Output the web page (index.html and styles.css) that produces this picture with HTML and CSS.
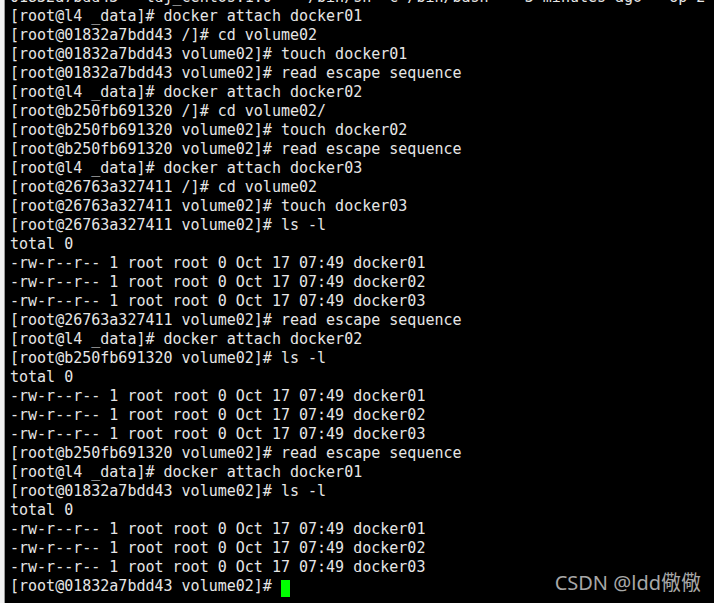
FILE: index.html
```html
<!DOCTYPE html>
<html>
<head>
<meta charset="utf-8">
<link rel="stylesheet" href="styles.css">
</head>
<body>
<div class="term">
<pre class="out">01832a7bdd43   ldj_centos:1.0   "/bin/sh -c /bin/bash"   3 minutes ago   Up 2 minutes
[root@l4 _data]# docker attach docker01
[root@01832a7bdd43 /]# cd volume02
[root@01832a7bdd43 volume02]# touch docker01
[root@01832a7bdd43 volume02]# read escape sequence
[root@l4 _data]# docker attach docker02
[root@b250fb691320 /]# cd volume02/
[root@b250fb691320 volume02]# touch docker02
[root@b250fb691320 volume02]# read escape sequence
[root@l4 _data]# docker attach docker03
[root@26763a327411 /]# cd volume02
[root@26763a327411 volume02]# touch docker03
[root@26763a327411 volume02]# ls -l
total 0
-rw-r--r-- 1 root root 0 Oct 17 07:49 docker01
-rw-r--r-- 1 root root 0 Oct 17 07:49 docker02
-rw-r--r-- 1 root root 0 Oct 17 07:49 docker03
[root@26763a327411 volume02]# read escape sequence
[root@l4 _data]# docker attach docker02
[root@b250fb691320 volume02]# ls -l
total 0
-rw-r--r-- 1 root root 0 Oct 17 07:49 docker01
-rw-r--r-- 1 root root 0 Oct 17 07:49 docker02
-rw-r--r-- 1 root root 0 Oct 17 07:49 docker03
[root@b250fb691320 volume02]# read escape sequence
[root@l4 _data]# docker attach docker01
[root@01832a7bdd43 volume02]# ls -l
total 0
-rw-r--r-- 1 root root 0 Oct 17 07:49 docker01
-rw-r--r-- 1 root root 0 Oct 17 07:49 docker02
-rw-r--r-- 1 root root 0 Oct 17 07:49 docker03
[root@01832a7bdd43 volume02]# <span class="cursor"> </span></pre>
<div class="mark">CSDN @ldd儆儆</div>
</div>
</body>
</html>
```
FILE: styles.css
```css
html, body {
  margin: 0;
  padding: 0;
  background: #000;
}
body {
  width: 714px;
  height: 603px;
  overflow: hidden;
}
.term {
  position: relative;
  width: 714px;
  height: 603px;
  overflow: hidden;
  background: #000;
  box-sizing: border-box;
  border-left: 4px solid #f2f2f2;
}
.term::before {
  content: "";
  position: absolute;
  left: 0;
  top: 0;
  bottom: 0;
  width: 1px;
  background: #9a9a9a;
}
.out {
  margin: -12px 0 0 0;
  padding-left: 6px;
  font-family: "DejaVu Sans Mono", monospace;
  font-size: 15px;
  line-height: 19px;
  color: #e6e6e6;
  white-space: pre;
}
.cursor {
  background: #00ff00;
  display: inline-block;
  width: 9px;
  height: 17px;
  vertical-align: -3px;
}
.mark {
  position: absolute;
  right: 13px;
  bottom: 8px;
  font-family: "Noto Sans", "Noto Sans CJK SC", sans-serif;
  font-size: 20px;
  line-height: 24px;
  color: #a8a8a8;
}
```
